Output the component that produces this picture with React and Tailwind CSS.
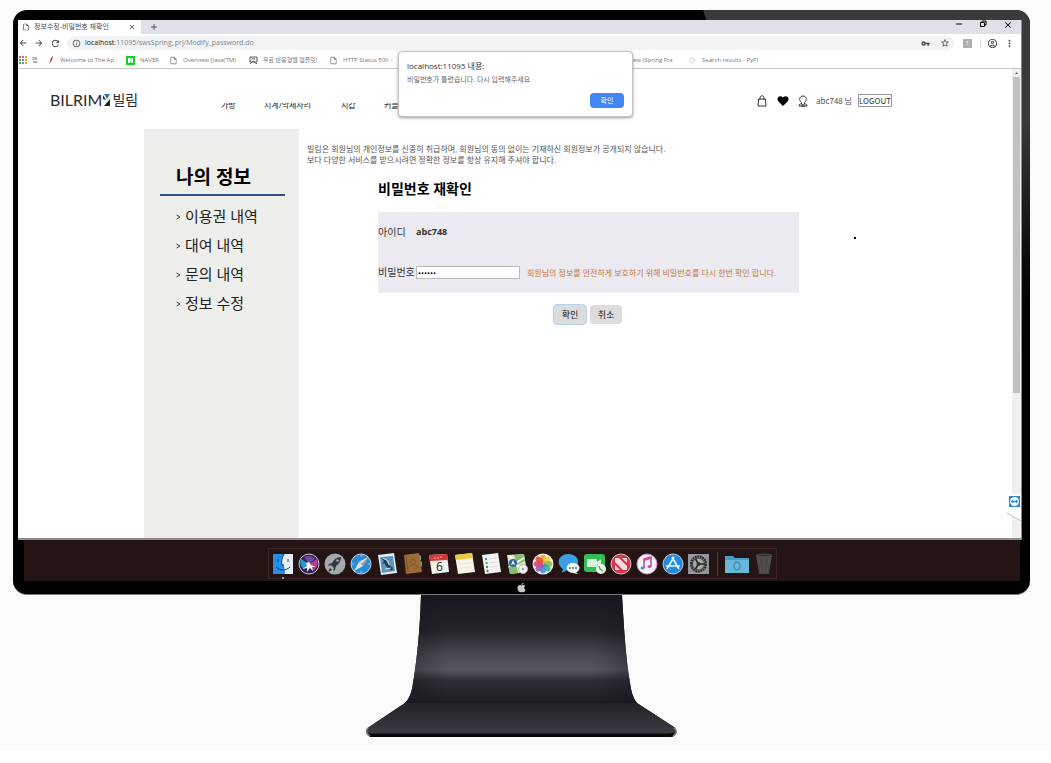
import React from "react";
import { FaApple } from "react-icons/fa";
import {
  MdArrowBack,
  MdArrowForward,
  MdRefresh,
  MdInfoOutline,
  MdVpnKey,
  MdStarBorder,
  MdMoreVert,
  MdClose,
  MdAdd,
  MdOutlineAccountCircle,
  MdOutlineInsertDriveFile,
} from "react-icons/md";

const font = "font-['Open_Sans','Noto_Sans_CJK_KR',sans-serif]";

function TabStrip() {
  return (
    <div className="flex h-[14px] items-stretch bg-[#dee1e6] text-[#45494d]">
      <div className="flex w-[123px] items-center gap-1 bg-white pl-1 pr-[5px]">
        <MdOutlineInsertDriveFile size={8} />
        <span className="flex-1 whitespace-nowrap text-[7px] leading-[10px]">정보수정-비밀번호 재확인</span>
        <button aria-label="탭 닫기"><MdClose size={8} /></button>
      </div>
      <button aria-label="새 탭" className="ml-2"><MdAdd size={10} /></button>
      <div className="ml-auto flex items-start gap-4 pr-2 text-black">
        <button aria-label="최소화"><svg width="8" height="8" viewBox="0 0 8 8"><path d="M1 4h6" stroke="currentColor" /></svg></button>
        <button aria-label="이전 크기로">
          <svg width="8" height="8" viewBox="0 0 8 8" fill="none" stroke="currentColor">
            <path d="M1.500 2.500h4v4h-4zM3 2.500V1h4v4H5.500" />
          </svg>
        </button>
        <button aria-label="닫기"><MdClose size={10} /></button>
      </div>
    </div>
  );
}

function AddressBar() {
  return (
    <div className="flex h-[18px] items-center bg-white pr-[6px] text-[#4a4d51]">
      <div className="flex w-[49px] items-center gap-[6px]">
        <button aria-label="뒤로"><MdArrowBack size={10} /></button>
        <button aria-label="앞으로"><MdArrowForward size={10} /></button>
        <button aria-label="새로고침"><MdRefresh size={11} /></button>
      </div>
      <div className="flex h-[14px] flex-1 items-center rounded-full bg-[#f1f3f4] pl-[5px] pr-1">
        <MdInfoOutline size={9} />
        <span className="ml-1 text-[7px] leading-[10px] text-[#80868b]">
          <span className="text-[#202124]">localhost</span>:11095/swsSpring_prj/Modify_password.do
        </span>
        <span className="ml-auto flex items-center gap-[10px]">
          <MdVpnKey size={9} />
          <MdStarBorder size={10} />
        </span>
      </div>
      <div className="ml-[9px] flex items-center">
        <span className="flex size-[9px] items-center justify-center bg-[#b0b0b0] text-[6px] leading-none text-white">1</span>
        <span className="ml-2 h-[9px] w-px bg-[#dadce0]" />
        <button aria-label="프로필" className="ml-[6px]"><MdOutlineAccountCircle size={11} /></button>
        <button aria-label="메뉴" className="ml-[6px]"><MdMoreVert size={11} /></button>
      </div>
    </div>
  );
}

const appColors = ["#e05a4e", "#e05a4e", "#e7a13c", "#5aa75c", "#5b8def", "#e7a13c", "#5aa75c", "#5aa75c", "#e7a13c"];

function Bookmark({ icon, label, width }) {
  return (
    <a href="#" className={`flex shrink-0 items-center gap-[5px] ${width}`}>
      <span className="flex w-[9px] shrink-0 justify-center">{icon}</span>
      <span className="overflow-hidden whitespace-nowrap">{label}</span>
    </a>
  );
}

function Bookmarks() {
  const page = <MdOutlineInsertDriveFile size={9} />;
  return (
    <nav className="flex h-[17px] items-center overflow-hidden border-b border-[#c8c8c8] bg-white text-[6px] leading-[10px] text-[#74777b]">
      <Bookmark
        width="w-[28px]"
        label="앱"
        icon={
          <svg width="8" height="8" viewBox="0 0 8 8">
            {appColors.map((c, i) => <rect key={i} x={(i % 3) * 3} y={Math.floor(i / 3) * 3} width="2" height="2" fill={c} />)}
          </svg>
        }
      />
      <Bookmark width="w-[72px] mr-[8px]" label="Welcome to The Ap" icon={<svg width="6" height="8" viewBox="0 0 6 8"><path d="M1 8 3 2l2-2-1 4z" fill="#c7252d" /></svg>} />
      <Bookmark
        width="w-[36px] mr-[7px]"
        label="NAVER"
        icon={<svg width="9" height="9" viewBox="0 0 9 9"><path fill="#19ce25" d="M0 0h9v9H0z" /><path fill="#fff" d="M2 2h2l1.500 2V2H7v5H5.500L4 5v2H2z" /></svg>}
      />
      <Bookmark width="w-[72px] mr-[8px]" label="Overview (Java(TM)" icon={page} />
      <Bookmark
        width="w-[74px] mr-[6px]"
        label="무료 반응형웹 템플릿!"
        icon={<svg width="9" height="9" viewBox="0 0 9 9" fill="none" stroke="#55585c"><path d="M1 1h7v5H1zM3 3h3M1 8l3-3 4 3" /></svg>}
      />
      <Bookmark width="w-[75px]" label="HTTP Status 500 –" icon={page} />
      <Bookmark width="w-[80px] ml-[197px] mr-[7px]" label="Overview (Spring Fra" icon={page} />
      <Bookmark width="w-[90px]" label="Search results - PyPI" icon={<svg width="8" height="9" viewBox="0 0 8 9" fill="none" stroke="#ddd"><path d="M1 2h4v5H1zM3 4h4" /></svg>} />
    </nav>
  );
}

function AlertDialog() {
  return (
    <div
      role="alertdialog"
      aria-label="알림"
      className="absolute left-[380px] top-[31px] z-10 flex w-[235px] flex-col rounded-sm border border-[#c4c4c4] bg-white px-2 pb-[8px] pt-[8px] shadow-[0_1px_3px_rgba(0,0,0,0.4)]"
    >
      <p className="text-[8px] leading-[12px] text-[#333]">localhost:11095 내용:</p>
      <p className="mt-[2px] text-[7px] leading-[12px] text-[#666]">비밀번호가 틀렸습니다. 다시 입력해주세요</p>
      <button className="mt-[7px] h-[15px] w-[34px] self-end rounded-sm bg-[#4285f4] text-[7px] leading-[15px] text-white">확인</button>
    </div>
  );
}

const categories = [
  ["가방", "w-[43px]"],
  ["시계/악세사리", "w-[77px]"],
  ["지갑", "w-[43px]"],
  ["커플", "w-[43px]"],
];

function SiteHeader() {
  return (
    <header className="flex h-[60px] items-start pl-8 pr-[120px]">
      <a href="#" aria-label="BILRIM 빌림" className="mt-[21px] flex w-[171px] items-center gap-px leading-[20px] text-[#2b2b2b]">
        <span className="font-['Lato',sans-serif] text-[16px]">BILRIM</span>
        <svg width="8" height="14" viewBox="0 0 8 14" className="shrink-0">
          <path d="M1 1h6L4 6z" fill="#2a78b5" />
          <path d="M0 2v4l3 1zM7 6v7H1z" fill="#222" />
        </svg>
        <span className="text-[14px]">빌림</span>
      </a>
      <nav className="mt-[34px] flex h-[7px] items-end overflow-hidden text-[8px] leading-[10px] text-[#222]">
        {categories.map(([name, width]) => <a key={name} href="#" className={`shrink-0 ${width}`}>{name}</a>)}
      </nav>
      <div className="ml-auto mt-[25px] flex items-center font-['Noto_Sans_CJK_KR',sans-serif] text-[8px] leading-[12px] text-[#555]">
        <a href="#" aria-label="장바구니">
          <svg width="10" height="12" viewBox="0 0 10 12" fill="none" stroke="#333">
            <path d="M1.500 4h7l.5 7H1zM3 5V3c0-3 4-3 4 0v2" />
          </svg>
        </a>
        <a href="#" aria-label="찜" className="ml-[10px]">
          <svg width="12" height="12" viewBox="0 0 12 12"><path d="M6 11 1.500 6.500C-1.500 3 3-.5 6 2.500 9-.5 13.500 3 10.500 6.500z" fill="#000" /></svg>
        </a>
        <a href="#" aria-label="내 정보" className="ml-[9px]">
          <svg width="10" height="12" viewBox="0 0 10 12" fill="none" stroke="#333">
            <path d="M3.500 7.500C.5 5.500 1.500 1 5 1s4.500 4.500 1.500 6.500v1.500M3.500 7.500V9M1 11c0-2 1-2 2.500-2 1 1 2 1 3 0C8 9 9 9 9 11zM3 11h4" />
          </svg>
        </a>
        <span className="ml-[8px] whitespace-nowrap">abc748 님</span>
        <button className="ml-[6px] border border-[#999] text-[8px] leading-[11px] text-[#333]">LOGOUT</button>
      </div>
    </header>
  );
}

const menu = ["이용권 내역", "대여 내역", "문의 내역", "정보 수정"];

function Sidebar() {
  return (
    <aside className="w-[155px] shrink-0 bg-[#eeefea] px-4 pt-[34px]">
      <h2 className="mr-[-2px] border-b-2 border-[#2d5288] pb-[3px] pl-4 text-[19px] font-bold leading-[28px] text-black">나의 정보</h2>
      <ul className="pl-4 pt-[6px] text-[15px] text-[#222]">
        {menu.map((item) => (
          <li key={item} className="h-[29px] leading-[29px]">
            <a href="#" className="flex items-center gap-1">
              <svg width="5" height="6" viewBox="0 0 5 6" fill="none" stroke="#444"><path d="M.5 1 4 3 .5 5" /></svg>
              {item}
            </a>
          </li>
        ))}
      </ul>
    </aside>
  );
}

function PasswordCheck() {
  return (
    <main className="flex-1 pl-2 pt-[14px]">
      <p className="text-[8px] leading-[11px] text-[#555]">
        빌림은 회원님의 개인정보를 신중히 취급하며, 회원님의 동의 없이는 기재하신 회원정보가 공개되지 않습니다.
        <br />
        보다 다양한 서비스를 받으시려면 정확한 정보를 항상 유지해 주셔야 합니다.
      </p>
      <form className="ml-[71px] mr-[213px]" onSubmit={(e) => e.preventDefault()}>
        <h1 className="mt-[14px] text-[14px] font-bold leading-[20px] text-black">비밀번호 재확인</h1>
        <div className="mt-[13px] grid grid-cols-[38px_1fr] bg-[#ebeaf0] text-[10px] text-[#333]">
          <span className="leading-[40px]">아이디</span>
          <strong className="text-[9px] leading-[40px]">abc748</strong>
          <label htmlFor="password" className="whitespace-nowrap leading-[41px]">비밀번호</label>
          <div className="flex items-center">
            <input id="password" type="password" defaultValue="abc748" className="h-[13px] w-[104px] border border-[#bbb] bg-white px-px text-[8px] leading-[11px] text-black" />
            <span className="ml-[7px] whitespace-nowrap text-[8px] text-[#c9763d]">회원님의 정보를 안전하게 보호하기 위해 비밀번호를 다시 한번 확인 합니다.</span>
          </div>
        </div>
        <div className="mt-[11px] flex items-center justify-center gap-[3px] pr-[2px] text-[9px] text-[#222]">
          <button type="submit" className="h-[21px] w-[34px] rounded-sm border border-[#b5d3ee] bg-[#dcdcdc]">확인</button>
          <button type="button" className="h-[19px] w-[32px] rounded-sm bg-[#dcdcdc]">취소</button>
        </div>
      </form>
    </main>
  );
}

function Browser() {
  return (
    <div className={`relative border-b-2 border-r border-[#8b8b8b] bg-white ${font}`}>
      <TabStrip />
      <AddressBar />
      <Bookmarks />
      <AlertDialog />
      <div className="relative flex h-[469px]">
        <div className="flex flex-1 flex-col">
          <SiteHeader />
          <div className="flex flex-1 pl-[126px]">
            <Sidebar />
            <PasswordCheck />
          </div>
        </div>
        <div className="flex w-[9px] flex-col items-center bg-[#efefef]">
          <svg width="9" height="8" viewBox="0 0 9 8"><path d="m3 5 1.500-2L6 5z" fill="#666" /></svg>
          <div className="h-[316px] w-[7px] bg-[#c1c1c1]" />
        </div>
        <span className="absolute left-[836px] top-[168px] size-[2px] bg-black" />
        <svg className="absolute bottom-[16px] right-0" width="15" height="28" viewBox="0 0 15 28">
          <path d="M0 2 2 0h13v28L0 19z" fill="#fff" />
          <path d="M1 19 15 27" stroke="#bbb" fill="none" />
          <rect x="3" y="2" width="11" height="11" fill="#2b8ad6" />
          <circle cx="8.500" cy="7.500" r="4.500" fill="#fff" />
          <path d="m4.500 7.500 2.500-2v1.300h3V5.500l2.500 2-2.500 2V8.200H7v1.300z" fill="#2b8ad6" />
        </svg>
      </div>
    </div>
  );
}

function DockIcon({ name, children }) {
  return (
    <svg width="22" height="22" viewBox="0 0 22 22" role="img" aria-label={name} className="shrink-0">
      {children}
    </svg>
  );
}

const petals = ["#f5a623", "#f4d03f", "#8bc34a", "#3fae8f", "#4a90d9", "#8e5bd0", "#d6478c", "#ec4a3b"];

function Dock() {
  return (
    <div className="ml-[6px] mr-[2px] flex justify-center bg-[#241514] pb-[2px] pt-[8px]">
      <div className="flex h-[31px] items-center gap-1 border border-[#3a2827] pl-[3px] pr-px">
        <div className="relative">
          <DockIcon name="Finder">
            <path d="M1 1h20v20H1z" fill="#e6eff7" />
            <path d="M1 1h11c-2 4-3 7-2 11h2l1 9H1z" fill="#268fe3" />
            <path d="M6 6v3M16 6v3M4 14c4 4 10 4 14 0M12 1c-2 4-3 7-2 11h2" stroke="#123a68" fill="none" />
          </DockIcon>
          <span className="absolute bottom-[-4px] left-[10px] size-[2px] rounded-full bg-[#c9c0bf]" />
        </div>
        <DockIcon name="Siri">
          <circle cx="11" cy="11" r="10" fill="#30205b" stroke="#c9c9d6" />
          <path d="M11 11 3 6c-2 5 1 9 3 10z" fill="#249bc7" />
          <path d="M11 11 19 6c2 5-1 10-4 12z" fill="#b5418e" />
          <path d="M11 11 6 4c4-2 9-1 11 2z" fill="#79439f" />
          <path d="m11 9 2 3 5 2-4 0 1 4-3-3-3 4 0-4-5 1 5-3-1-3z" fill="#f3eef8" />
        </DockIcon>
        <DockIcon name="Launchpad">
          <circle cx="11" cy="11" r="10.500" fill="#a6a9ac" />
          <path d="M17 4c-5 0-8 4-9 6l-3 1-1 2 3-1 3 3-1 3 2-1 1-4c3-2 5-5 5-9zM6 15l-2 4 4-2z" fill="#34383c" />
          <circle cx="13.500" cy="7.500" r="1.300" fill="#a6a9ac" />
        </DockIcon>
        <DockIcon name="Safari">
          <circle cx="11" cy="11" r="10" fill="#278cdb" stroke="#c5d4df" />
          <path d="M11 2v2M11 18v2M2 11h2M18 11h2" stroke="#9bd0f5" />
          <path d="m18 4-9 5 4 4z" fill="#eee7dc" />
          <path d="m4 18 5-9 4 4z" fill="#d6e8f7" />
          <path d="m18 4-5 9-2-2z" fill="#b98f79" />
        </DockIcon>
        <DockIcon name="Mail">
          <path d="m2 2 16-2 3 20-16 2z" fill="#e8edf1" />
          <path d="m4 4 13-1 2 15-13 2z" fill="#5b96c8" />
          <path d="m5 5 5 2 2 4 5 4-1 3-5-4-3-4-2 1 2-3z" fill="#273b4b" />
          <path d="m7 5 5 3 1 4M9 16l6-1" stroke="#d4e5ef" fill="none" />
        </DockIcon>
        <DockIcon name="연락처">
          <path d="m2 2 15-2 3 19-16 2z" fill="#9b6c35" />
          <path d="m17 2 2 1v4l-1 1zM18 8l2 1v4l-1 1z" fill="#76a979" />
          <circle cx="11" cy="9" r="2.500" fill="none" stroke="#7d5428" />
          <path d="M6 16c1-5 9-6 10-1M4 3l2 16" stroke="#7d5428" fill="none" />
        </DockIcon>
        <DockIcon name="캘린더">
          <path d="m1 2 18-1 2 18-17 2z" fill="#f3f3f1" />
          <path d="m1 2 18-1 1 6-18 1z" fill="#d3383a" />
          <path d="M6 5h2M9 5h2M12 4h2" stroke="#f6aaa9" />
          <text x="11.500" y="18" textAnchor="middle" fontSize="12" fontFamily="Open Sans" fill="#222">6</text>
        </DockIcon>
        <DockIcon name="메모">
          <path d="m1 2 17-2 3 19-17 2z" fill="#f6f3e9" />
          <path d="m1 2 17-2 1 5-17 2z" fill="#efc63f" />
          <path d="m5 11 12-1M5 15l13-1" stroke="#e8e5dc" />
        </DockIcon>
        <DockIcon name="미리 알림">
          <path d="m2 2 16-2 3 19-16 2z" fill="#f4f4f3" />
          <path d="m9 6 8-1M9 10l9-1M10 14l8-1" stroke="#dedede" />
          <circle cx="6" cy="6" r="1.200" fill="#3c8bd0" /><circle cx="6.500" cy="10" r="1.200" fill="#55a753" /><circle cx="7" cy="14" r="1.200" fill="#45927a" /><circle cx="7.500" cy="18" r="1.200" fill="#777" />
        </DockIcon>
        <DockIcon name="지도">
          <path d="m1 2 17-1 3 18-17 2z" fill="#dfe6c8" />
          <path d="m8 2 10-1 1 7-8 4zM2 13l8-2 2 9-8 1z" fill="#86bd68" />
          <path d="m4 3 5 8 9 6M3 14 18 5" stroke="#fff" strokeWidth="2" fill="none" />
          <circle cx="7" cy="10" r="4" fill="#2868a5" /><path d="m7 7 2 5-2-1-2 1z" fill="#fff" />
          <circle cx="17" cy="16" r="4.500" fill="#f0f0ed" stroke="#b4b4ae" /><circle cx="17" cy="16" r="1.200" fill="#999" />
        </DockIcon>
        <DockIcon name="사진">
          <circle cx="11" cy="11" r="10.500" fill="#f5f3ef" />
          {petals.map((c, i) => <ellipse key={c} cx="11" cy="6" rx="3" ry="4.500" fill={c} opacity=".9" transform={`rotate(${i * 45} 11 11)`} />)}
        </DockIcon>
        <DockIcon name="메시지">
          <path d="M10 1c14 0 13 16 0 16-2 0-4 3-6 2l1-3C-3 11 1 1 10 1z" fill="#3c9ee5" />
          <ellipse cx="15" cy="15" rx="6.500" ry="5" fill="#f6f7f8" /><path d="m17 18 3 3-5-1z" fill="#f6f7f8" />
          <circle cx="12" cy="15" r="1" fill="#357daf" /><circle cx="15" cy="15" r="1" fill="#357daf" /><circle cx="18" cy="15" r="1" fill="#357daf" />
        </DockIcon>
        <DockIcon name="FaceTime">
          <rect x="0" y="1" width="21" height="18" rx="3" fill="#35bd55" />
          <rect x="3" y="6" width="10" height="8" rx="1" fill="#d9f2dd" /><path d="m13 9 4-3v8l-4-3z" fill="#d9f2dd" />
          <circle cx="17" cy="16" r="5" fill="#eff3ed" /><path d="m15 13 1 3 3 2" stroke="#49af5b" strokeWidth="1.500" fill="none" />
        </DockIcon>
        <DockIcon name="News">
          <circle cx="11" cy="11" r="10" fill="#d5354d" stroke="#ddc3c5" />
          <path d="M5 5h4l8 8v4h-4L5 9zM12 5h5v5zM5 12l5 5H5z" fill="#f8dde0" />
        </DockIcon>
        <DockIcon name="iTunes">
          <circle cx="11" cy="11" r="10" fill="#f5f1f7" stroke="#d794bd" />
          <path d="M8 15V6l7-2v9" fill="none" stroke="#9d50ba" strokeWidth="1.500" /><path d="m8 6 7-2v2L8 8z" fill="#dc4b91" />
          <ellipse cx="6.500" cy="15" rx="2" ry="1.500" fill="#5089da" /><ellipse cx="13.500" cy="13.500" rx="2" ry="1.500" fill="#cf4c91" />
        </DockIcon>
        <DockIcon name="App Store">
          <circle cx="11" cy="11" r="10" fill="#218be3" stroke="#bccdde" />
          <path d="m12 4-7 12M10 4l7 12M4 13h14" stroke="#eef7ff" strokeWidth="1.600" fill="none" />
        </DockIcon>
        <DockIcon name="시스템 환경설정">
          <path d="M0 1h21v20H0z" fill="#93969a" />
          <circle cx="10.500" cy="11" r="7.500" fill="#aaa" stroke="#28292b" strokeWidth="2" strokeDasharray="2 .6" />
          <circle cx="10.500" cy="11" r="6" fill="none" stroke="#333" />
          <path d="m10.500 11-3-5M10.500 11h6M10.500 11l-3 5" stroke="#222" strokeWidth="1.500" /><circle cx="10.500" cy="11" r="2" fill="#333" />
        </DockIcon>
        <span className="mx-[3px] h-[24px] w-px bg-[#4d3d3c]" />
        <svg width="24" height="22" viewBox="0 0 24 22" role="img" aria-label="다운로드">
          <path d="M0 3h8l2 2h14v15H0z" fill="#4a9dc2" /><path d="M0 7h24v13H0z" fill="#67b9d9" />
          <ellipse cx="12" cy="13" rx="3" ry="4" fill="none" stroke="#438daf" strokeWidth="1.500" />
        </svg>
        <DockIcon name="휴지통">
          <path d="M3 2h16l-3 19H6z" fill="#4a4746" /><ellipse cx="11" cy="2.500" rx="8" ry="1.500" fill="#34302f" stroke="#777" strokeWidth=".5" />
          <path d="m6 5 2 15M11 5v15M16 5l-2 15" stroke="#595655" />
        </DockIcon>
      </div>
    </div>
  );
}

function Stand() {
  return (
    <svg className="mx-auto block" width="311" height="143" viewBox="0 0 311 143" aria-hidden="true">
      <defs>
        <linearGradient id="neck" x1="0" y1="0" x2="0" y2="1">
          <stop offset="0" stopColor="#19181e" />
          <stop offset=".33" stopColor="#25242a" />
          <stop offset=".52" stopColor="#45434b" />
          <stop offset=".69" stopColor="#57555e" />
          <stop offset=".79" stopColor="#302e35" />
          <stop offset="1" stopColor="#1e1c22" />
        </linearGradient>
        <linearGradient id="neckSides" x1="0" x2="1">
          <stop offset="0" stopColor="#111015" stopOpacity=".4" />
          <stop offset=".18" stopColor="#111015" stopOpacity="0" />
          <stop offset=".82" stopColor="#111015" stopOpacity="0" />
          <stop offset="1" stopColor="#111015" stopOpacity=".4" />
        </linearGradient>
        <linearGradient id="foot" x1="0" y1="0" x2="0" y2="1">
          <stop offset="0" stopColor="#232127" />
          <stop offset="1" stopColor="#3d3b43" />
        </linearGradient>
      </defs>
      <path d="M55 0h201c2 35 4 65 8 88 1 8 3 15 7 20l37 24c4 3 3 9-2 10H6c-7-1-7-7-3-10l36-24c5-5 7-12 8-20 4-23 7-53 8-88z" fill="#25232a" />
      <path d="M55 0h201c2 35 4 65 8 88 1 8 3 15 7 20H39c5-5 7-12 8-20 4-23 7-53 8-88z" fill="url(#neck)" />
      <path d="M55 0h201c2 35 4 65 8 88 1 8 3 15 7 20H39c5-5 7-12 8-20 4-23 7-53 8-88z" fill="url(#neckSides)" />
      <path d="M39 108h232l37 24c2 2 1 5 0 6H3c-3-2-2-4 0-6z" fill="url(#foot)" />
      <path d="M1 137c3 3 9 2 14 2h282c5 0 9 0 12-2-1 4-3 5-6 5H7c-4 0-6-2-6-5z" fill="#08080b" />
      <path d="M2 133c-3 3-1 6 2 8M308 133c4 3 2 6-1 8" stroke="#85838a" strokeWidth="1.500" fill="none" />
    </svg>
  );
}

export default function App() {
  return (
    <div className={`min-h-screen bg-white pr-[3px] ${font}`}>
      <div className="bg-[#f8fbfa] pb-[12px] pl-[13px] pr-[18px] pt-[10px]">
        <div className="relative overflow-hidden rounded-[14px] border-b border-[#777] bg-black">
          <div className="absolute right-0 top-0 h-[360px] w-[327px] bg-linear-to-b from-[#3a3a3a] from-30% to-black [clip-path:polygon(0_0,100%_0,100%_100%,10px_30px)]" />
          <div className="relative pl-[5px] pr-[8px] pt-[10px]">
            <Browser />
            <Dock />
            <div className="flex h-[13px] items-center justify-center pl-[2px] text-[#c9c9c9]">
              <FaApple size={11} />
            </div>
          </div>
        </div>
        <Stand />
      </div>
    </div>
  );
}
